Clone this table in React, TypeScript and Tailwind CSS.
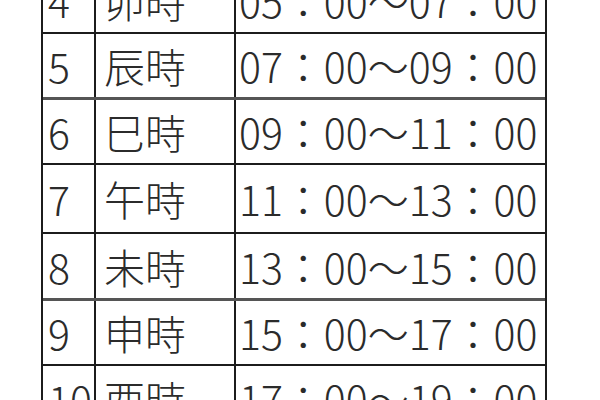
const rows = [
  { no: "4", name: "卯時", time: "05：00～07：00", h: "h-[66px]", top: "border-t-2 border-[#1c1c1c]" },
  { no: "5", name: "辰時", time: "07：00～09：00", h: "h-[65px]", top: "border-t-2 border-[#1c1c1c]" },
  { no: "6", name: "巳時", time: "09：00～11：00", h: "h-[66px]", top: "border-t-[3px] border-[#555]" },
  { no: "7", name: "午時", time: "11：00～13：00", h: "h-[69px]", top: "border-t-2 border-[#1c1c1c]" },
  { no: "8", name: "未時", time: "13：00～15：00", h: "h-[66px]", top: "border-t-2 border-[#1c1c1c]" },
  { no: "9", name: "申時", time: "15：00～17：00", h: "h-[66px]", top: "border-t-[3px] border-[#555]" },
  { no: "10", name: "酉時", time: "17：00～19：00", h: "h-[66px]", top: "border-t-2 border-[#1c1c1c]" },
];

export default function App() {
  return (
    <div className="w-[600px] h-[400px] overflow-hidden bg-white">
      <div
        className="ml-[41px] w-[506px] -mt-[34px] border-x-2 border-[#1c1c1c] text-[#2b2b2b] text-[41px] font-light leading-none"
        style={{ fontFamily: '"Noto Sans CJK TC", "Noto Sans CJK JP", sans-serif' }}
      >
        {rows.map((r) => (
          <div key={r.no} className={`flex ${r.h} ${r.top}`}>
            <div className="w-[53px] shrink-0 flex items-center pl-[5px] border-r-2 border-[#1c1c1c] whitespace-nowrap">
              {r.no}
            </div>
            <div className="w-[140px] shrink-0 flex items-center pl-[8px] border-r-2 border-[#1c1c1c] whitespace-nowrap">
              {r.name}
            </div>
            <div className="flex-1 flex items-center pl-[3px] whitespace-nowrap">
              {r.time}
            </div>
          </div>
        ))}
      </div>
    </div>
  );
}
